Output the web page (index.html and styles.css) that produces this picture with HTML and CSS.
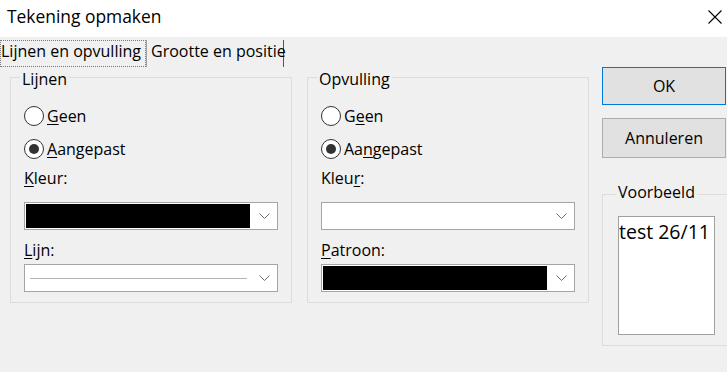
FILE: index.html
```html
<!DOCTYPE html>
<html>
<head>
    <title>Tekening opmaken</title>
    <link rel="stylesheet" href="styles.css">
</head>
<body>
    <div class="titlebar">
        <span class="title">Tekening opmaken</span>
        <svg class="close" width="14" height="14" viewBox="0 0 14 14">
            <path d="M0.5 0.5 L13.5 13.5 M13.5 0.5 L0.5 13.5" stroke="#000" stroke-width="1.1" fill="none"/>
        </svg>
    </div>

    <div class="tabs">
        <div class="tab tab-active">Lijnen en opvulling</div>
        <div class="tab tab-other">Grootte en positie</div>
    </div>

    <div class="content">
        <fieldset class="group">
            <legend>Lijnen</legend>
            <div class="radio radio-first"><span class="dot"></span><span><u>G</u>een</span></div>
            <div class="radio radio-second checked"><span class="dot"></span><span><u>A</u>angepast</span></div>
            <div class="label label-top"><u>K</u>leur:</div>
            <div class="combo combo-top">
                <span class="swatch swatch-black"></span>
                <span class="arrow"><svg width="11" height="6" viewBox="0 0 11 6"><path d="M0.5 0.5 L5.5 5.5 L10.5 0.5" stroke="#6d6d6d" fill="none"/></svg></span>
            </div>
            <div class="label label-sub"><u>L</u>ijn:</div>
            <div class="combo combo-sub">
                <span class="swatch swatch-line"><span class="stroke"></span></span>
                <span class="arrow"><svg width="11" height="6" viewBox="0 0 11 6"><path d="M0.5 0.5 L5.5 5.5 L10.5 0.5" stroke="#6d6d6d" fill="none"/></svg></span>
            </div>
        </fieldset>

        <fieldset class="group group-right">
            <legend>Opvulling</legend>
            <div class="radio radio-first"><span class="dot"></span><span>G<u>e</u>en</span></div>
            <div class="radio radio-second checked"><span class="dot"></span><span>Aa<u>n</u>gepast</span></div>
            <div class="label label-top">Kleu<u>r</u>:</div>
            <div class="combo combo-top">
                <span class="swatch"></span>
                <span class="arrow"><svg width="11" height="6" viewBox="0 0 11 6"><path d="M0.5 0.5 L5.5 5.5 L10.5 0.5" stroke="#6d6d6d" fill="none"/></svg></span>
            </div>
            <div class="label label-sub"><u>P</u>atroon:</div>
            <div class="combo combo-sub">
                <span class="swatch swatch-black"></span>
                <span class="arrow"><svg width="11" height="6" viewBox="0 0 11 6"><path d="M0.5 0.5 L5.5 5.5 L10.5 0.5" stroke="#6d6d6d" fill="none"/></svg></span>
            </div>
        </fieldset>

        <div class="side">
            <button class="btn btn-default">OK</button>
            <button class="btn btn-cancel">Annuleren</button>
            <fieldset class="preview-group">
                <legend>Voorbeeld</legend>
                <div class="preview">test 26/11</div>
            </fieldset>
        </div>
    </div>
</body>
</html>
```
FILE: styles.css
```css
body {
    margin: 0;
    width: 727px;
    height: 372px;
    overflow: hidden;
    font-family: "Open Sans", sans-serif;
    font-size: 16px;
    color: #000;
    background: #f0f0f0;
}
u {
    text-underline-offset: 2px;
}
.titlebar {
    height: 37px;
    display: flex;
    align-items: flex-start;
    background: #fff;
}
.title {
    font-size: 17.4px;
    line-height: 24px;
    padding: 4px 0 0 7px;
}
.close {
    margin: 10px 5px 0 auto;
}
.tabs {
    display: flex;
    height: 30px;
    padding-top: 3px;
    box-sizing: border-box;
}
.tab {
    height: 27px;
    box-sizing: border-box;
    line-height: 20px;
    white-space: nowrap;
}
.tab-active {
    width: 146px;
    border: 1px dotted #7a7a7a;
}
.tab-other {
    width: 138px;
    padding: 1px 0 0 4px;
    border-left: 1px solid #a0a0a0;
    border-right: 1px solid #555;
}
.content {
    display: flex;
    align-items: flex-start;
    padding-left: 10px;
}
.group {
    flex: none;
    width: 282px;
    min-width: 0;
    box-sizing: border-box;
    margin: 1px 0 0;
    padding: 0 13px 10px;
    border: 1px solid #dcdcdc;
}
.group legend {
    padding: 4px 2px 0;
    margin-left: -4px;
    line-height: 14px;
}
.group-right {
    margin-left: 15px;
}
.radio {
    display: flex;
    align-items: center;
    gap: 3px;
    height: 20px;
    line-height: 20px;
}
.radio-first {
    margin-top: 20px;
}
.radio-second {
    margin-top: 13px;
}
.dot {
    width: 20px;
    height: 20px;
    box-sizing: border-box;
    display: flex;
    align-items: center;
    justify-content: center;
    border: 1px solid #333;
    border-radius: 50%;
    background: #fff;
}
.checked .dot::after {
    content: "";
    width: 10px;
    height: 10px;
    border-radius: 50%;
    background: #333;
}
.label {
    line-height: 20px;
}
.label-top {
    margin-top: 9px;
}
.label-sub {
    margin-top: 10px;
}
.combo {
    display: flex;
    height: 28px;
    box-sizing: border-box;
    padding: 1px;
    border: 1px solid #a5a5a5;
    background: #fff;
}
.combo-top {
    margin-top: 14px;
}
.combo-sub {
    margin-top: 4px;
}
.swatch {
    width: 224px;
    flex: none;
}
.swatch-black {
    background: #000;
}
.swatch-line {
    display: flex;
    align-items: center;
    padding: 0 3px 0 4px;
    box-sizing: border-box;
}
.stroke {
    flex: 1;
    height: 1px;
    background: #b4b4b4;
}
.arrow {
    flex: 1;
    display: flex;
    align-items: center;
    justify-content: center;
    padding-left: 2px;
}
.side {
    flex: none;
    width: 125px;
    margin-left: 13px;
}
.btn {
    display: flex;
    align-items: center;
    justify-content: center;
    width: 124px;
    height: 38px;
    padding: 0;
    border: 1px solid #adadad;
    background: #e1e1e1;
    font: inherit;
    color: #000;
}
.btn-default {
    border-color: #0078d7;
}
.btn-cancel {
    height: 40px;
    margin-top: 13px;
}
.preview-group {
    min-width: 0;
    margin: 27px 0 0;
    padding: 0 0 10px 15px;
    border: 1px solid #dcdcdc;
    border-right: none;
}
.preview-group legend {
    padding: 0 2px 4px;
    margin-left: -2px;
    line-height: 14px;
}
.preview {
    width: 97px;
    height: 119px;
    box-sizing: border-box;
    margin-top: 13px;
    padding-top: 3px;
    border: 1px solid #a0a0a0;
    background: #fff;
    font-size: 19.5px;
    line-height: 24px;
    white-space: nowrap;
}
```
